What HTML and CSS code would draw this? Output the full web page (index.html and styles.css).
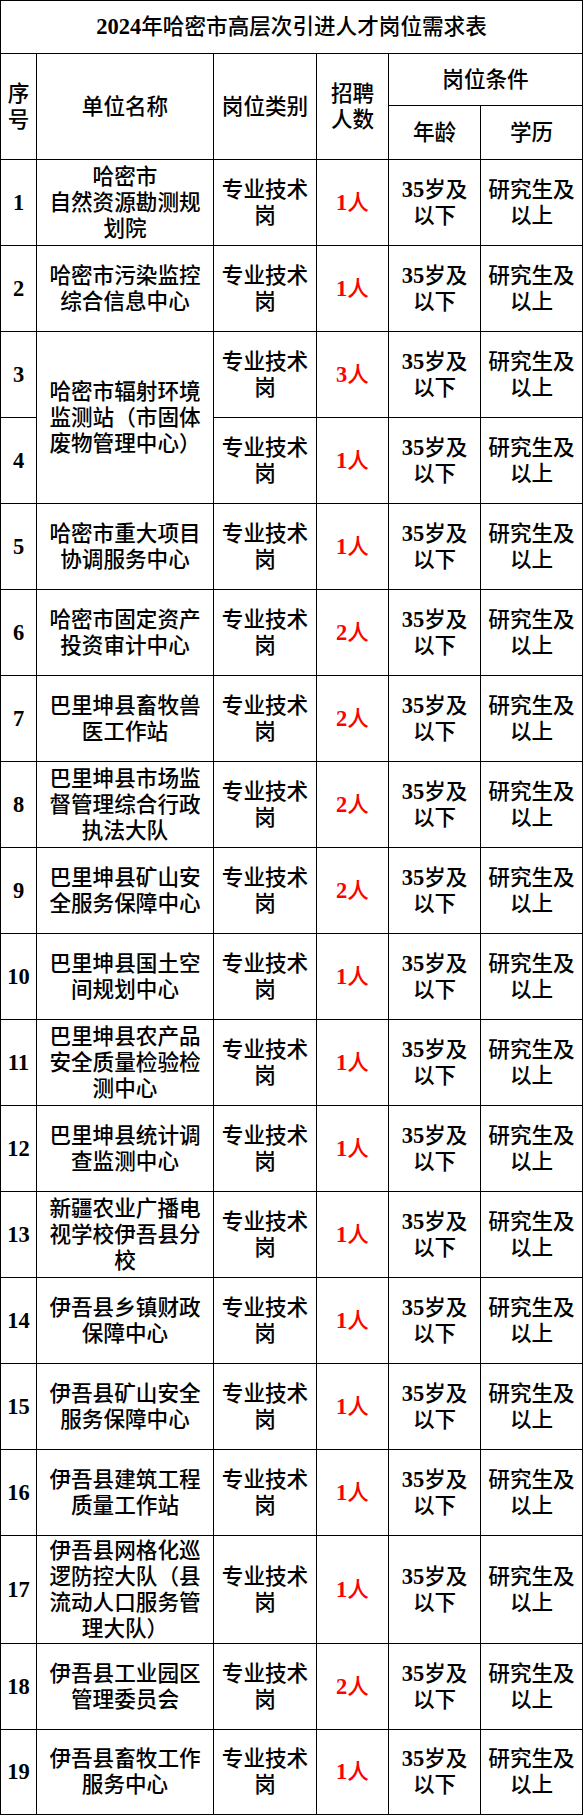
FILE: index.html
```html
<!DOCTYPE html>
<html lang="zh-CN">
<head>
<meta charset="utf-8">
<title>2024年哈密市高层次引进人才岗位需求表</title>
<link rel="stylesheet" href="styles.css">
</head>
<body>
<table class="sheet">
  <colgroup>
    <col class="c-no">
    <col class="c-name">
    <col class="c-type">
    <col class="c-count">
    <col class="c-age">
    <col class="c-edu">
  </colgroup>
  <tbody>
    <tr class="r-title"><td colspan="6" class="title"><span class="d">2024</span>年哈密市高层次引进人才岗位需求表</td></tr>
    <tr class="r-h1">
      <td rowspan="2">序<br>号</td>
      <td rowspan="2">单位名称</td>
      <td rowspan="2">岗位类别</td>
      <td rowspan="2">招聘<br>人数</td>
      <td colspan="2">岗位条件</td>
    </tr>
    <tr class="r-h2"><td>年龄</td><td>学历</td></tr>

    <tr class="r"><td class="d">1</td><td>哈密市<br>自然资源勘测规<br>划院</td><td>专业技术<br>岗</td><td class="num"><span class="d">1</span>人</td><td><span class="d">35</span>岁及<br>以下</td><td>研究生及<br>以上</td></tr>
    <tr class="r"><td class="d">2</td><td>哈密市污染监控<br>综合信息中心</td><td>专业技术<br>岗</td><td class="num"><span class="d">1</span>人</td><td><span class="d">35</span>岁及<br>以下</td><td>研究生及<br>以上</td></tr>
    <tr class="r"><td class="d">3</td><td rowspan="2">哈密市辐射环境<br>监测站（市固体<br>废物管理中心）</td><td>专业技术<br>岗</td><td class="num"><span class="d">3</span>人</td><td><span class="d">35</span>岁及<br>以下</td><td>研究生及<br>以上</td></tr>
    <tr class="r"><td class="d">4</td><td>专业技术<br>岗</td><td class="num"><span class="d">1</span>人</td><td><span class="d">35</span>岁及<br>以下</td><td>研究生及<br>以上</td></tr>
    <tr class="r"><td class="d">5</td><td>哈密市重大项目<br>协调服务中心</td><td>专业技术<br>岗</td><td class="num"><span class="d">1</span>人</td><td><span class="d">35</span>岁及<br>以下</td><td>研究生及<br>以上</td></tr>
    <tr class="r"><td class="d">6</td><td>哈密市固定资产<br>投资审计中心</td><td>专业技术<br>岗</td><td class="num"><span class="d">2</span>人</td><td><span class="d">35</span>岁及<br>以下</td><td>研究生及<br>以上</td></tr>
    <tr class="r"><td class="d">7</td><td>巴里坤县畜牧兽<br>医工作站</td><td>专业技术<br>岗</td><td class="num"><span class="d">2</span>人</td><td><span class="d">35</span>岁及<br>以下</td><td>研究生及<br>以上</td></tr>
    <tr class="r"><td class="d">8</td><td>巴里坤县市场监<br>督管理综合行政<br>执法大队</td><td>专业技术<br>岗</td><td class="num"><span class="d">2</span>人</td><td><span class="d">35</span>岁及<br>以下</td><td>研究生及<br>以上</td></tr>
    <tr class="r"><td class="d">9</td><td>巴里坤县矿山安<br>全服务保障中心</td><td>专业技术<br>岗</td><td class="num"><span class="d">2</span>人</td><td><span class="d">35</span>岁及<br>以下</td><td>研究生及<br>以上</td></tr>
    <tr class="r"><td class="d">10</td><td>巴里坤县国土空<br>间规划中心</td><td>专业技术<br>岗</td><td class="num"><span class="d">1</span>人</td><td><span class="d">35</span>岁及<br>以下</td><td>研究生及<br>以上</td></tr>
    <tr class="r"><td class="d">11</td><td>巴里坤县农产品<br>安全质量检验检<br>测中心</td><td>专业技术<br>岗</td><td class="num"><span class="d">1</span>人</td><td><span class="d">35</span>岁及<br>以下</td><td>研究生及<br>以上</td></tr>
    <tr class="r"><td class="d">12</td><td>巴里坤县统计调<br>查监测中心</td><td>专业技术<br>岗</td><td class="num"><span class="d">1</span>人</td><td><span class="d">35</span>岁及<br>以下</td><td>研究生及<br>以上</td></tr>
    <tr class="r"><td class="d">13</td><td>新疆农业广播电<br>视学校伊吾县分<br>校</td><td>专业技术<br>岗</td><td class="num"><span class="d">1</span>人</td><td><span class="d">35</span>岁及<br>以下</td><td>研究生及<br>以上</td></tr>
    <tr class="r"><td class="d">14</td><td>伊吾县乡镇财政<br>保障中心</td><td>专业技术<br>岗</td><td class="num"><span class="d">1</span>人</td><td><span class="d">35</span>岁及<br>以下</td><td>研究生及<br>以上</td></tr>
    <tr class="r"><td class="d">15</td><td>伊吾县矿山安全<br>服务保障中心</td><td>专业技术<br>岗</td><td class="num"><span class="d">1</span>人</td><td><span class="d">35</span>岁及<br>以下</td><td>研究生及<br>以上</td></tr>
    <tr class="r"><td class="d">16</td><td>伊吾县建筑工程<br>质量工作站</td><td>专业技术<br>岗</td><td class="num"><span class="d">1</span>人</td><td><span class="d">35</span>岁及<br>以下</td><td>研究生及<br>以上</td></tr>
    <tr class="r-tall"><td class="d">17</td><td>伊吾县网格化巡<br>逻防控大队（县<br>流动人口服务管<br>理大队）</td><td>专业技术<br>岗</td><td class="num"><span class="d">1</span>人</td><td><span class="d">35</span>岁及<br>以下</td><td>研究生及<br>以上</td></tr>
    <tr class="r"><td class="d">18</td><td>伊吾县工业园区<br>管理委员会</td><td>专业技术<br>岗</td><td class="num"><span class="d">2</span>人</td><td><span class="d">35</span>岁及<br>以下</td><td>研究生及<br>以上</td></tr>
    <tr class="r-last"><td class="d">19</td><td>伊吾县畜牧工作<br>服务中心</td><td>专业技术<br>岗</td><td class="num"><span class="d">1</span>人</td><td><span class="d">35</span>岁及<br>以下</td><td>研究生及<br>以上</td></tr>
  </tbody>
</table>
</body>
</html>
```

FILE: styles.css
```css
html, body {
  margin: 0;
  padding: 0;
  background: #ffffff;
}

.sheet {
  border-collapse: collapse;
  table-layout: fixed;
  width: 583px;
  font-family: "Liberation Serif", "Noto Sans CJK SC", serif;
  font-size: 21.6px;
  font-weight: 500;
  line-height: 26px;
  color: #000000;
}

.c-no { width: 36px; }
.c-name { width: 177px; }
.c-type { width: 103px; }
.c-count { width: 72px; }
.c-age { width: 92px; }
.c-edu { width: 102px; }

.sheet td {
  border: 1px solid #000000;
  padding: 0;
  text-align: center;
  vertical-align: middle;
  white-space: nowrap;
  overflow: hidden;
}

.r-title { height: 53px; }
.r-h1 { height: 52px; }
.r-h2 { height: 54px; }
.r { height: 86px; }
.r-tall { height: 108px; }
.r-last { height: 85px; }

.sheet .d {
  font-weight: 700;
  font-size: 22.5px;
}

.num {
  color: #ff0000;
}
```
